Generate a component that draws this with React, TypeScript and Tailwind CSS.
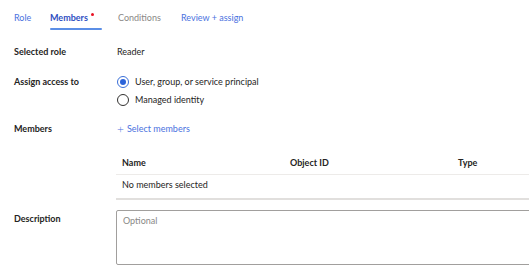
export default function App() {
  const font = { fontFamily: 'Lato, "Noto Sans", sans-serif' };
  return (
    <div className="h-[274px] w-[529px] overflow-hidden bg-white text-[9px] text-[#252423]" style={font}>
      {/* tabs */}
      <div className="flex h-[30px] items-start pl-[14px] pt-[11px]">
        <div className="w-[36px] text-[#4a72e0]">Role</div>
        <div className="relative flex w-[52px] flex-col">
          <span className="w-fit font-bold text-[#2f4fc2]">
            Members
            <span className="relative -top-[5px] ml-[3px] inline-block h-[3px] w-[3px] rounded-full bg-[#e81123]" />
          </span>
          <div className="mt-[3px] h-[2px] w-[52px] rounded bg-[#5b8ee6]" />
        </div>
        <div className="ml-[16px] w-[63px] text-[#8a8886]">Conditions</div>
        <div className="text-[#4a72e0]">Review + assign</div>
      </div>

      <div className="mt-[14px] flex flex-col pl-[14px]">
        <div className="flex h-[16px] items-center">
          <div className="w-[103px] shrink-0 font-bold">Selected role</div>
          <div>Reader</div>
        </div>

        <div className="mt-[14px] flex">
          <div className="w-[103px] shrink-0 pt-[1px] font-bold">Assign access to</div>
          <div className="flex flex-col gap-[2px]">
            <label className="flex h-[16px] items-center gap-[6px]">
              <span className="flex h-[12px] w-[12px] items-center justify-center rounded-full border border-[#3a6fd8]">
                <span className="h-[6px] w-[6px] rounded-full bg-[#2b63d9]" />
              </span>
              User, group, or service principal
            </label>
            <label className="flex h-[16px] items-center gap-[6px]">
              <span className="h-[12px] w-[12px] rounded-full border border-[#323130]" />
              Managed identity
            </label>
          </div>
        </div>

        <div className="mt-[13px] flex h-[16px] items-center">
          <div className="w-[103px] shrink-0 font-bold">Members</div>
          <div className="flex items-center gap-[3px] text-[#4a72e0]">
            <span className="text-[12px] font-light leading-none">+</span>
            <span>Select members</span>
          </div>
        </div>

        <div className="ml-[102px] mt-[14px] w-[460px] shrink-0">
          <div className="flex h-[24px] items-center border-b border-[#edebe9] pl-[6px] font-bold">
            <div className="w-[168px]">Name</div>
            <div className="w-[168px]">Object ID</div>
            <div>Type</div>
          </div>
          <div className="flex h-[25px] items-start border-b-2 border-[#e1dfdd] pl-[6px] pt-[3px]">No members selected</div>
        </div>

        <div className="mt-[10px] flex">
          <div className="w-[102px] shrink-0 pt-[2px] font-bold">Description</div>
          <textarea
            placeholder="Optional"
            className="h-[55px] w-[460px] shrink-0 resize-none rounded-[2px] border border-[#a19f9d] px-[6px] py-[3px] text-[9px] placeholder:text-[#8a8886]"
            style={font}
          />
        </div>
      </div>
    </div>
  );
}
